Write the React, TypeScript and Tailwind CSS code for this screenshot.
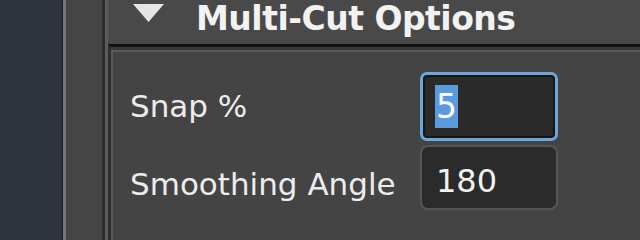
import React from 'react';

// Zoomed Maya-style "Multi-Cut Options" panel: collapsible header, two numeric fields.
const FONT = { fontFamily: '"DejaVu Sans", Tahoma, sans-serif' };

function Field({ value, focused }: { value: string; focused?: boolean }) {
  if (focused) {
    return (
      <div className="flex h-[69px] w-[138px] items-center rounded-[7px] border-[3px] border-[#6ea6dc] bg-[#2a2a2a] shadow-[inset_0_0_0_2px_#161616]">
        <span className="ml-[12px] bg-[#5a9be0] px-[1px] text-[33px] leading-[43px] text-white">{value}</span>
      </div>
    );
  }
  return (
    <div className="flex h-[65px] w-[138px] items-center rounded-[8px] border-2 border-[#555] bg-[#2b2b2b] pt-[6px]">
      <span className="ml-[14px] text-[32px] text-[#f2f2f2]">{value}</span>
    </div>
  );
}

export default function App() {
  return (
    <div className="flex h-[240px] w-[640px] overflow-hidden bg-[#444]" style={FONT}>
      <div className="w-[63px] shrink-0 border-r border-[#222] bg-[#2e343d]" />
      <div className="w-[3px] shrink-0 bg-[#767676]" />
      <div className="w-[36px] shrink-0 bg-[#454545]" />
      <div className="flex flex-1 flex-col border-l-[3px] border-[#2c2c2c]">
        <div className="flex h-[44px] shrink-0 items-center border-l-[3px] border-[#5c5c5c] bg-[#494949]">
          <svg width="33" height="20" viewBox="0 0 33 20" className="ml-[24px] mb-[18px]">
            <path d="M1 1 L32 1 L16.5 19 Z" fill="#e6e6e6" />
          </svg>
          <span className="ml-[31px] mb-[6px] text-[33px] font-bold tracking-[-0.5px] text-[#f2f2f2]">Multi-Cut Options</span>
        </div>
        <div className="flex flex-1 border-l-[3px] border-[#5c5c5c]">
          <div className="flex flex-1 flex-col border-t-[3px] border-l-[3px] border-t-[#111] border-l-[#2e2e2e]">
            <div className="flex flex-1 flex-col border-t-[3px] border-[#393939]">
              <div className="flex flex-1 flex-col border-t-[2px] border-l-[2px] border-[#5a5a5a] pt-[20px]">
                <div className="flex items-center">
                  <span className="ml-[17px] w-[290px] text-[31px] text-[#ececec]">Snap %</span>
                  <Field value="5" focused />
                </div>
                <div className="mt-[4px] flex items-center">
                  <span className="ml-[17px] w-[290px] pt-[14px] text-[31px] text-[#ececec]">Smoothing Angle</span>
                  <Field value="180" />
                </div>
              </div>
            </div>
          </div>
        </div>
      </div>
    </div>
  );
}
